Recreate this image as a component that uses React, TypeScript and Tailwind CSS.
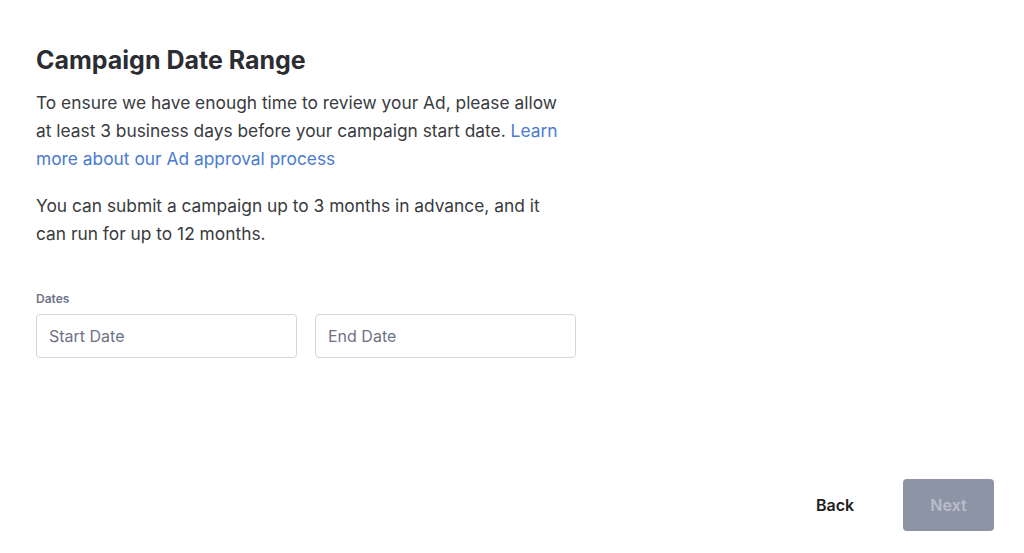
export default function App() {
  return (
    <div className="w-[1024px] h-[553px] bg-white relative font-['Inter',sans-serif] text-[#39364f] flex flex-col">
      <div className="pl-[36px] pt-[44px] w-[600px]">
        <h1 className="text-[25px] leading-[32px] font-bold text-[#2b2d33]">Campaign Date Range</h1>
        <p className="mt-[13px] text-[17.35px] leading-[28px] text-[#3a3b40] w-[540px]">
          To ensure we have enough time to review your Ad, please allow at least 3 business days before your campaign start date.{" "}
          <a className="text-[#4a7bd0]">Learn more about our Ad approval process</a>
        </p>
        <p className="mt-[19px] text-[17.35px] leading-[28px] text-[#3a3b40] w-[530px]">
          You can submit a campaign up to 3 months in advance, and it can run for up to 12 months.
        </p>
        <div className="mt-[43px]">
          <div className="text-[12px] leading-[16px] font-semibold text-[#6f7287]">Dates</div>
          <div className="mt-[7px] flex gap-[18px]">
            <div className="w-[261px] h-[44px] border border-[#d5d6dc] rounded-[4px] flex items-center px-[12px] text-[16px] text-[#6f7287]">Start Date</div>
            <div className="w-[261px] h-[44px] border border-[#d5d6dc] rounded-[4px] flex items-center px-[12px] text-[16px] text-[#6f7287]">End Date</div>
          </div>
        </div>
      </div>
      <div className="mt-auto flex justify-end items-center gap-[30px] pr-[30px] pb-[22px]">
        <button className="w-[76px] h-[52px] text-[16px] font-semibold text-[#1e1e22]">Back</button>
        <button className="w-[91px] h-[52px] rounded-[4px] bg-[#8d94a6] text-[16px] font-semibold text-[#b9bdc9]">Next</button>
      </div>
    </div>
  );
}
